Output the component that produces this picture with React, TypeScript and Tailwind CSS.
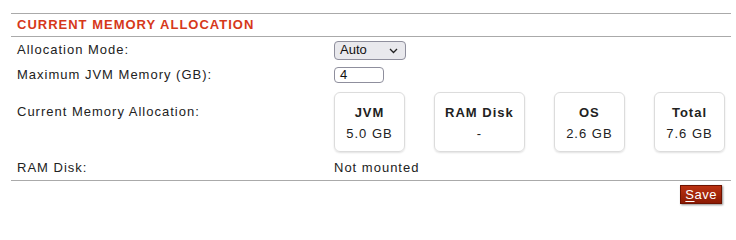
import React from "react"

const cards = [
  { label: "JVM", value: "5.0 GB" },
  { label: "RAM Disk", value: "-" },
  { label: "OS", value: "2.6 GB" },
  { label: "Total", value: "7.6 GB" },
]

export default function App() {
  return (
    <div className="min-h-[226px] bg-white pt-[13px] pl-[11px] font-['Liberation_Sans',Arial,sans-serif] text-[13px] leading-[16px] tracking-[1px] text-[#222]">
      <div className="w-[720px]">
        {/* Section header */}
        <div className="box-border flex h-[24px] items-center border-y border-[#aaaaaa] pl-[6px]">
          <span className="font-bold text-[#d6381a] tracking-[1px]">CURRENT MEMORY ALLOCATION</span>
        </div>

        <div className="flex h-[26px] items-center">
          <div className="w-[323px] pl-[6px]">Allocation Mode:</div>
          <div className="relative flex h-[19px] w-[72px] items-center rounded-[4px] border border-[#8f8f9d] bg-[#e9e9ed] pl-[5px] tracking-normal text-[#111]">
            Auto
            <svg className="absolute right-[7px] top-[6px]" width="9" height="6" viewBox="0 0 9 6" fill="none">
              <path d="M1 1l3.5 3.5L8 1" stroke="#222" strokeWidth="1.3" />
            </svg>
          </div>
        </div>

        <div className="flex h-[24px] items-center">
          <div className="w-[323px] pl-[6px]">Maximum JVM Memory (GB):</div>
          <div className="flex h-[16px] w-[50px] items-center rounded-[4px] border border-[#8f8f9d] bg-white pl-[5px] tracking-normal text-[#111]">
            4
          </div>
        </div>

        <div className="flex items-start pt-[5px] pb-[4px]">
          <div className="w-[323px] pl-[6px] pt-[12px]">Current Memory Allocation:</div>
          <div className="flex w-[391px] justify-between">
            {cards.map((c) => (
              <div
                key={c.label}
                className="box-border flex h-[60px] min-w-[71px] flex-col items-center gap-[5px] rounded-[6px] border border-[#dcdcdc] px-[10px] pt-[12px] shadow-[0_1px_2px_rgba(0,0,0,0.12)]"
              >
                <div className="font-bold">{c.label}</div>
                <div>{c.value}</div>
              </div>
            ))}
          </div>
        </div>

        <div className="box-border flex h-[25px] items-center border-b border-[#aaaaaa]">
          <div className="w-[323px] pl-[6px]">RAM Disk:</div>
          <div>Not mounted</div>
        </div>

        <div className="flex justify-end pr-[9px] pt-[4px]">
          <button className="box-border flex h-[19px] items-center border border-[#6e1200] bg-gradient-to-b from-[#bb3212] to-[#8c1a04] px-[4px] text-[13px] tracking-[0.5px] text-white shadow-[1px_1px_2px_rgba(0,0,0,0.45)]">
            <span className="underline underline-offset-2">S</span>ave
          </button>
        </div>
      </div>
    </div>
  )
}
